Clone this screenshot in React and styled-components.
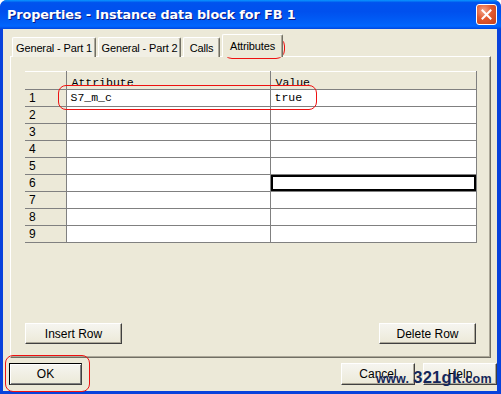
import React from "react";
import styled, { createGlobalStyle } from "styled-components";

const GlobalStyle = createGlobalStyle`
  html, body {
    margin: 0;
    padding: 0;
    background: #ffffff;
    overflow: hidden;
  }
`;

const Window = styled.div`
  position: relative;
  width: 501px;
  height: 394px;
  display: flex;
  flex-direction: column;
  background: #0842dc;
  border-radius: 7px 7px 0 0;
  overflow: hidden;
  font-family: "Liberation Sans", Arial, sans-serif;
  font-size: 11px;
  color: #000;
`;

const TitleBar = styled.div`
  height: 29px;
  flex: none;
  display: flex;
  align-items: center;
  justify-content: space-between;
  padding: 0 4px 0 7px;
  background: linear-gradient(
    #0997ff 0,
    #0053ee 9%,
    #0050ee 40%,
    #0060f8 80%,
    #0066ff 90%,
    #0046df 100%
  );
  h1 {
    margin: 0;
    color: #fff;
    font-family: "DejaVu Sans", Verdana, sans-serif;
    font-size: 12.8px;
    font-weight: bold;
    letter-spacing: -0.1px;
    text-shadow: 1px 1px 0 #0a1883;
  }
`;

const CloseButton = styled.div`
  width: 19px;
  height: 19px;
  border: 1px solid #fff;
  border-radius: 3px;
  background: radial-gradient(circle at 35% 30%, #f3a68a 0, #e2592f 45%, #c3401a 100%);
  display: flex;
  align-items: center;
  justify-content: center;
`;

const Body = styled.div`
  flex: 1;
  margin: 0 4px 3px 3px;
  background: #ece9d8;
  display: flex;
  flex-direction: column;
  padding: 5px 6px 0 7px;
`;

const TabStrip = styled.div`
  display: flex;
  align-items: flex-end;
  height: 23px;
  padding-left: 2px;
  position: relative;
  z-index: 1;
  margin-bottom: -1px;
`;

const Tab = styled.div`
  width: ${(p) => p.$w}px;
  height: ${(p) => (p.$active ? "23px" : "20px")};
  box-sizing: border-box;
  margin-right: 2px;
  display: flex;
  align-items: center;
  justify-content: center;
  white-space: nowrap;
  letter-spacing: -0.15px;
  background: ${(p) => (p.$active ? "#ece9d8" : "#f1efe4")};
  border-top: 1px solid #fff;
  border-left: 1px solid #fff;
  border-right: 1px solid #716f64;
  box-shadow: inset -1px 0 0 #aca899;
  border-radius: 2px 2px 0 0;
  padding-top: ${(p) => (p.$active ? "0" : "1px")};
`;

const Panel = styled.div`
  height: 302px;
  box-sizing: border-box;
  border-top: 1px solid #fff;
  border-left: 1px solid #fff;
  border-right: 1px solid #716f64;
  border-bottom: 1px solid #716f64;
  box-shadow: inset -1px -1px 0 #aca899;
  display: flex;
  flex-direction: column;
  justify-content: space-between;
  padding: 14px 14px 13px 14px;
`;

const Grid = styled.table`
  border-collapse: collapse;
  table-layout: fixed;
  width: 451px;
  font-family: "Liberation Mono", "Courier New", monospace;
  font-size: 11.5px;
`;

const HeadCell = styled.th`
  height: 17px;
  padding: 0 0 0 5px;
  text-align: left;
  font-weight: normal;
  vertical-align: bottom;
  background: #ece9d8;
  border-top: 1px solid #fff;
  border-right: 1px solid #808080;
  border-bottom: 1px solid #808080;
  line-height: 13px;
`;

const RowHead = styled.td`
  height: 16px;
  padding: 0 0 0 4px;
  background: #ece9d8;
  font-family: "Liberation Sans", Arial, sans-serif;
  font-size: 12px;
  border-right: 1px solid #808080;
  border-bottom: 1px solid #808080;
  line-height: 14px;
`;

const Cell = styled.td`
  height: 16px;
  padding: 0 0 0 4px;
  background: #fff;
  border-right: 1px solid #808080;
  border-bottom: 1px solid #808080;
  line-height: 14px;
  box-shadow: ${(p) => (p.$selected ? "inset 0 0 0 2px #000" : "none")};
`;

const ButtonRow = styled.div`
  display: flex;
  justify-content: space-between;
  align-items: center;
`;

const Button = styled.button`
  width: ${(p) => p.$w || 97}px;
  height: ${(p) => p.$h || 21}px;
  font-family: "Liberation Sans", Arial, sans-serif;
  font-size: 12px;
  color: #000;
  background: linear-gradient(#f6f5f0, #ece9d8);
  border: 1px solid ${(p) => (p.$default ? "#000" : "#ffffff")};
  border-right-color: #404040;
  border-bottom-color: #404040;
  box-shadow: ${(p) =>
    p.$default
      ? "inset 1px 1px 0 #fff, inset -1px -1px 0 #808080"
      : "inset -1px -1px 0 #aca899"};
  padding: 0;
  margin: 0;
`;

const Footer = styled.div`
  display: flex;
  align-items: center;
  padding-top: 5px;
  margin-left: -1px;
  margin-right: -6px;
  gap: 8px;
  & > :first-child {
    margin-right: auto;
  }
`;

const Ring = styled.div`
  position: absolute;
  border: 1px solid #ee1111;
  border-radius: ${(p) => p.$r || 8}px;
  pointer-events: none;
`;

const Watermark = styled.div`
  position: absolute;
  left: 376px;
  top: 368px;
  font-family: "Liberation Sans", Arial, sans-serif;
  font-weight: bold;
  color: #14275a;
  white-space: nowrap;
  letter-spacing: 0.3px;
  span.small {
    font-size: 12.5px;
  }
  span.big {
    font-size: 16.5px;
  }
`;

const rows = [1, 2, 3, 4, 5, 6, 7, 8, 9];

export default function App() {
  return (
    <>
      <GlobalStyle />
      <Window>
        <TitleBar>
          <h1>Properties - Instance data block for FB 1</h1>
          <CloseButton>
            <svg width="11" height="11" viewBox="0 0 11 11">
              <path d="M1.5 1.5 L9.5 9.5 M9.5 1.5 L1.5 9.5" stroke="#fff" strokeWidth="2" strokeLinecap="square" />
            </svg>
          </CloseButton>
        </TitleBar>
        <Body>
          <TabStrip>
            <Tab $w={84}>General - Part 1</Tab>
            <Tab $w={83}>General - Part 2</Tab>
            <Tab $w={37}>Calls</Tab>
            <Tab $w={61} $active>Attributes</Tab>
          </TabStrip>
          <Panel>
            <Grid>
              <colgroup>
                <col style={{ width: 41 }} />
                <col style={{ width: 204 }} />
                <col style={{ width: 206 }} />
              </colgroup>
              <thead>
                <tr>
                  <HeadCell />
                  <HeadCell>Attribute</HeadCell>
                  <HeadCell>Value</HeadCell>
                </tr>
              </thead>
              <tbody>
                {rows.map((n) => (
                  <tr key={n}>
                    <RowHead>{n}</RowHead>
                    <Cell>{n === 1 ? "S7_m_c" : ""}</Cell>
                    <Cell $selected={n === 6}>{n === 1 ? "true" : ""}</Cell>
                  </tr>
                ))}
              </tbody>
            </Grid>
            <ButtonRow>
              <Button>Insert Row</Button>
              <Button>Delete Row</Button>
            </ButtonRow>
          </Panel>
          <Footer>
            <Button $w={73} $h={22} $default>OK</Button>
            <Button $w={74} $h={22}>Cancel</Button>
            <Button $w={74} $h={22}>Help</Button>
          </Footer>
        </Body>
        <Ring style={{ left: 223, top: 37, width: 60, height: 20 }} $r={9} />
        <Ring style={{ left: 58, top: 85, width: 257, height: 23 }} $r={8} />
        <Ring style={{ left: 5, top: 355, width: 83, height: 35 }} $r={8} />
        <Watermark>
          <span className="small">www. </span>
          <span className="big">321gk</span>
          <span className="small">.com</span>
        </Watermark>
      </Window>
    </>
  );
}
